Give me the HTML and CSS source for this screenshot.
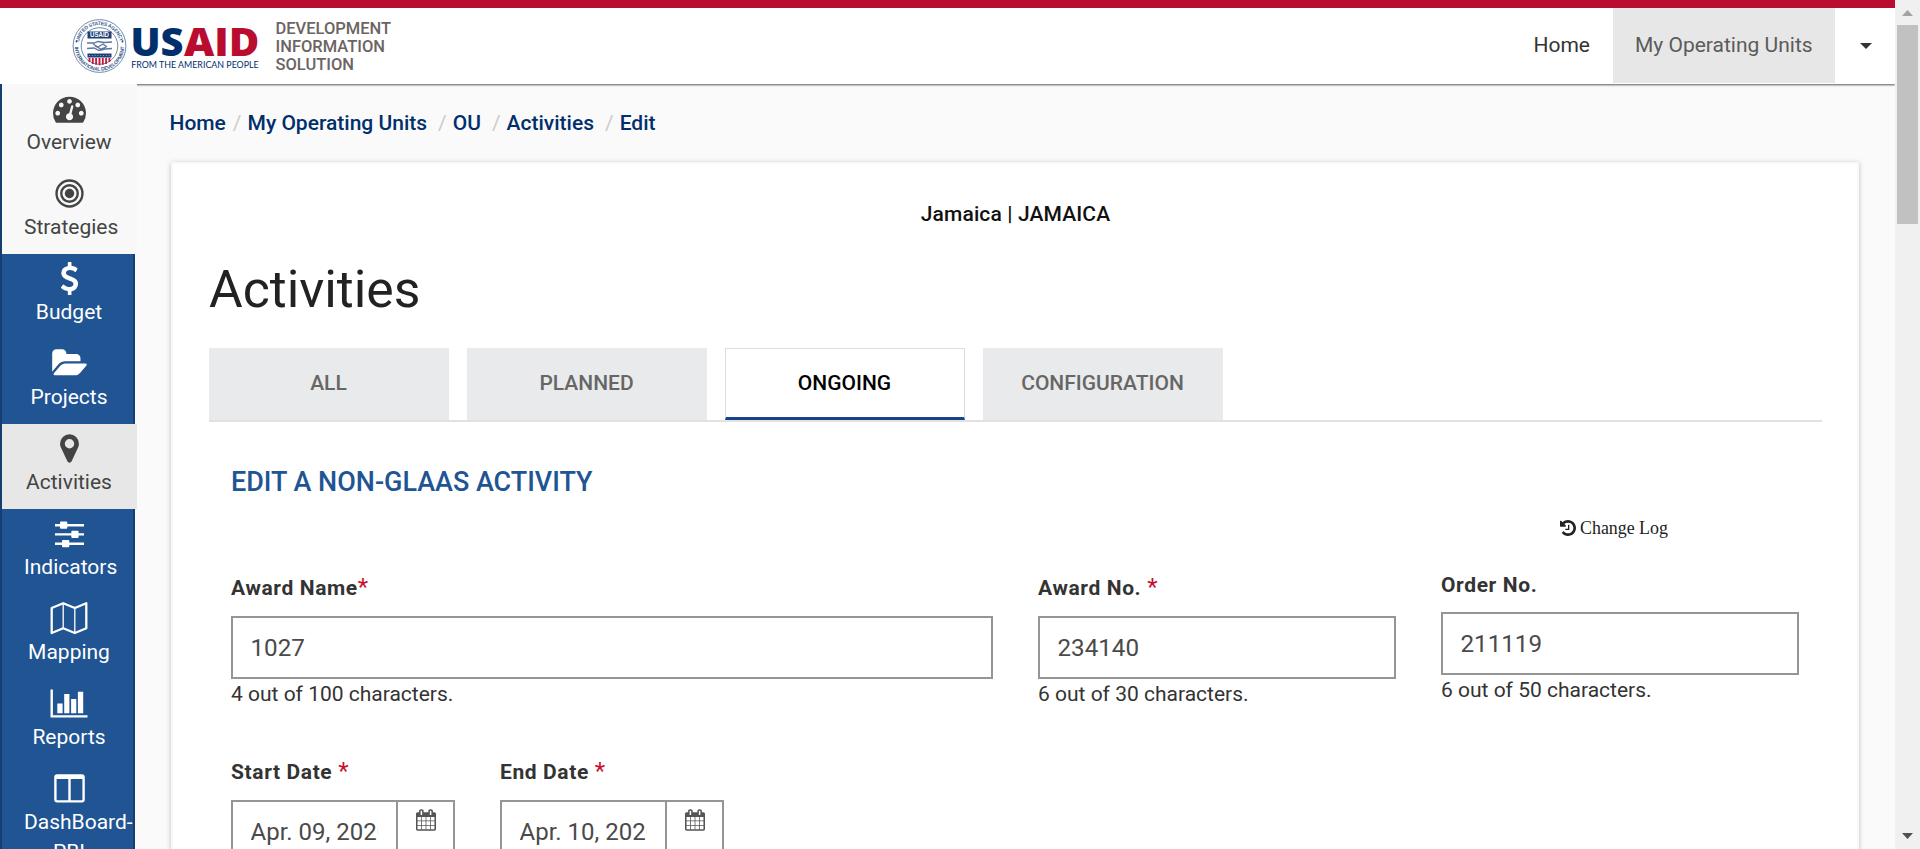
FILE: index.html
```html
<!DOCTYPE html>
<html lang="en">
<head>
<meta charset="utf-8">
<title>Activities - Development Information Solution</title>
<link rel="stylesheet" href="styles.css">
</head>
<body>
<div class="page">
  <div class="viewport">
    <header class="header">
      <div class="brand">
        <svg class="logo" width="190" height="60" viewBox="0 0 190 60" role="img" aria-label="USAID from the American people">
          <defs>
            <path id="arc-top" d="M7.600 30a20.900 20.900 0 0 1 41.800 0"/>
            <path id="arc-bottom" d="M3.700 30a24.800 24.800 0 0 0 49.600 0"/>
          </defs>
          <circle cx="28.500" cy="30" r="26.400" fill="#fff" stroke="#6f8aae" stroke-width="1"/>
          <circle cx="28.500" cy="30" r="18.300" fill="#fff" stroke="#6f8aae" stroke-width="1"/>
          <g class="seal-text">
            <text textLength="57"><textPath href="#arc-top" startOffset="4" textLength="57">UNITED STATES AGENCY</textPath></text>
            <text textLength="76"><textPath href="#arc-bottom" startOffset="1" textLength="76">INTERNATIONAL DEVELOPMENT</textPath></text>
          </g>
          <circle cx="5.500" cy="25.500" r=".9" fill="#1d3f74"/>
          <circle cx="51.500" cy="25.500" r=".9" fill="#1d3f74"/>
          <rect x="16.500" y="15.500" width="24" height="7" fill="#1d3f74"/>
          <text class="seal-name" x="19" y="21.300" textLength="19" lengthAdjust="spacingAndGlyphs">USAID</text>
          <path d="M16 27h7l4-1.500 6 1 8-.5M16 32.500l7-.5 5 2.500 6-1.500 7-.5M22 28l5 3 5-3 4 3M24 30l6 3 5-2" fill="none" stroke="#5b789f" stroke-width="1.300"/>
          <path d="M16.500 37.500h24v4h-24z" fill="#1d3f74"/>
          <path d="M18 39.500h21" stroke="#8da2bf" stroke-width="1" stroke-dasharray="1 1.800"/>
          <path d="M18.500 42v4M21.800 42v6M25.100 42v6.700M28.500 42v7.300M31.800 42v6.700M35.100 42v6M38.400 42v4" stroke="#c41e3f" stroke-width="1.900"/>
          <text class="logo-name logo-us" x="59.500" y="40" textLength="53" lengthAdjust="spacingAndGlyphs">US</text>
          <text class="logo-name logo-aid" x="113" y="40" textLength="75.500" lengthAdjust="spacingAndGlyphs">AID</text>
          <text class="logo-tag" x="60.200" y="52" textLength="127.500" lengthAdjust="spacingAndGlyphs">FROM THE AMERICAN PEOPLE</text>
        </svg>
        <div class="product">DEVELOPMENT<br>INFORMATION<br>SOLUTION</div>
      </div>
      <nav class="topnav">
        <a class="topnav-link">Home</a>
        <a class="topnav-link topnav-active">My Operating Units</a>
        <a class="topnav-menu"><svg width="12" height="6" viewBox="0 0 12 6"><path d="M0 0h12L6 6z" fill="#333"/></svg></a>
      </nav>
    </header>

    <div class="body">
      <aside class="sidebar">
        <a class="side-item side-light">
          <svg class="icon" viewBox="0 0 1792 1792"><path d="M384 1152q0-53-37.500-90.500t-90.500-37.500-90.500 37.500-37.500 90.500 37.500 90.500 90.500 37.500 90.500-37.500 37.500-90.500zm192-448q0-53-37.500-90.500t-90.500-37.500-90.500 37.500-37.500 90.500 37.500 90.500 90.500 37.500 90.500-37.500 37.500-90.500zm428 481l101-382q6-26-7.500-48.500t-38.500-29.500-48 6.500-30 39.500l-101 382q-60 5-107 43.500t-63 98.500q-20 77 20 146t117 89 146-20 89-117q16-60-6-117t-72-91zm660-33q0-53-37.500-90.500t-90.500-37.500-90.500 37.500-37.500 90.500 37.500 90.500 90.500 37.500 90.500-37.500 37.500-90.500zm-640-640q0-53-37.500-90.500t-90.500-37.500-90.500 37.500-37.500 90.500 37.500 90.500 90.500 37.500 90.500-37.500 37.500-90.500zm448 192q0-53-37.500-90.500t-90.500-37.500-90.500 37.500-37.500 90.500 37.500 90.500 90.500 37.500 90.500-37.500 37.500-90.500zm320 448q0 261-141 483-19 29-54 29h-1402q-35 0-54-29-141-221-141-483 0-182 71-348t191-286 286-191 348-71 348 71 286 191 191 286 71 348z"/></svg>
          <span class="side-label">Overview</span>
        </a>
        <a class="side-item side-light">
          <svg class="icon" viewBox="0 0 1792 1792"><circle cx="896" cy="896" r="256"/><circle class="ring" cx="896" cy="896" r="448"/><circle class="ring" cx="896" cy="896" r="704"/></svg>
          <span class="side-label">Strategies</span>
        </a>
        <a class="side-item">
          <svg class="icon" viewBox="0 0 1792 1792"><path d="M1362 1185q0 153-99.500 263.500t-258.500 136.500v175q0 14-9 23t-23 9h-135q-13 0-22.500-9.500t-9.500-22.500v-175q-66-9-127.500-31t-101.500-44.500-74-48-46.500-37.500-17.500-18q-17-21-2-41l103-135q7-10 23-12 15-2 24 9l2 2q113 99 243 125 37 8 74 8 81 0 142.500-43t61.500-122q0-28-15-53t-33.500-42-58.500-37.500-66-32-80-32.500q-39-16-61.500-25t-61.500-26.500-62.500-31-56.500-35.500-53.500-42.500-43.500-49-35.500-58-21-66.500-8.500-78q0-138 98-242t255-134v-180q0-13 9.500-22.500t22.500-9.500h135q14 0 23 9t9 23v176q57 6 110.500 23t87 33.500 63.500 37.500 39 29 15 14q17 18 5 38l-81 146q-8 15-23 16-14 3-27-7-3-3-14.500-12t-39-26.500-58.500-32-74.500-26-85.500-11.500q-95 0-155 43t-60 111q0 26 8.500 48t29.500 41.500 39.500 33 56 31 60.500 27 70 27.500q53 20 81 31.500t76 35 75.500 42.500 62 50 53 63.500 31.500 76.500 13 94z"/></svg>
          <span class="side-label">Budget</span>
        </a>
        <a class="side-item">
          <svg class="icon icon-wide" viewBox="0 0 1943 1792"><path d="M1943 952q0 31-31 66l-336 396q-43 51-120.500 86.500t-143.500 35.500h-1088q-34 0-60.500-13t-26.500-43q0-31 31-66l336-396q43-51 120.500-86.500t143.500-35.500h1088q34 0 60.500 13t26.500 43zm-343-344v160h-832q-94 0-197 47.500t-164 119.500l-337 396-5 6q0-4-.5-12.500t-.5-12.500v-960q0-92 66-158t158-66h320q92 0 158 66t66 158v32h544q92 0 158 66t66 158z"/></svg>
          <span class="side-label">Projects</span>
        </a>
        <a class="side-item side-active">
          <svg class="icon" viewBox="0 0 1792 1792"><path d="M1152 640q0-106-75-181t-181-75-181 75-75 181 75 181 181 75 181-75 75-181zm256 0q0 109-33 179l-364 774q-16 33-47.500 52t-67.500 19-67.500-19-46.500-52l-365-774q-33-70-33-179 0-212 150-362t362-150 362 150 150 362z"/></svg>
          <span class="side-label">Activities</span>
        </a>
        <a class="side-item">
          <svg class="icon" viewBox="0 0 33 33"><path d="M2 7h29v2.400H2zM2 16.200h29v2.400H2zM2 25.500h29v2.400H2z"/><rect x="7" y="4.600" width="7.300" height="7.200" rx="1"/><rect x="18.300" y="13.800" width="7.300" height="7.200" rx="1"/><rect x="9" y="23.100" width="7.300" height="7.200" rx="1"/></svg>
          <span class="side-label">Indicators</span>
        </a>
        <a class="side-item">
          <svg class="icon icon-xwide" viewBox="0 0 38 33"><path class="line" d="M1.700 6L13.200 1.200 24.800 6 36.300 1.200V26.200L24.800 31 13.200 26.200 1.700 31z"/><path class="thin" d="M13.200 1.200v25M24.800 6v25"/></svg>
          <span class="side-label">Mapping</span>
        </a>
        <a class="side-item">
          <svg class="icon icon-xwide" viewBox="0 0 38 33"><path d="M.5 2.500h2.400v25.700h34.600v2.300H.5zM7.300 16.500h5.300v9.700H7.300zM14.200 7h5.200v19.200h-5.200zM21.100 12h5.200v14.200h-5.200zM27.900 4.800h5.300v21.400h-5.300z"/></svg>
          <span class="side-label">Reports</span>
        </a>
        <a class="side-item">
          <svg class="icon" viewBox="0 0 33 33"><path fill-rule="evenodd" d="M4.200 2.300h24.600a3 3 0 0 1 3 3v22.200a3 3 0 0 1-3 3H4.200a3 3 0 0 1-3-3V5.300a3 3 0 0 1 3-3zM3.600 7v20.600a.6.600 0 0 0 .6.600h11.100V7zM17.700 7v21.200h11.100a.6.600 0 0 0 .6-.6V7z"/></svg>
          <span class="side-label">DashBoard-PBI</span>
        </a>
      </aside>

      <main class="main">
        <nav class="crumbs">
          <a>Home</a><span class="sep">/</span><a>My Operating Units</a><span class="sep sep-wide">/</span><a>OU</a><span class="sep sep-wide">/</span><a>Activities</a><span class="sep sep-wide">/</span><a>Edit</a>
        </nav>
        <section class="card">
          <div class="ou-name">Jamaica | JAMAICA</div>
          <h1 class="title">Activities</h1>
          <div class="tabs">
            <a class="tab">ALL</a>
            <a class="tab">PLANNED</a>
            <a class="tab tab-active">ONGOING</a>
            <a class="tab">CONFIGURATION</a>
          </div>
          <form class="form">
            <h2 class="form-title">EDIT A NON-GLAAS ACTIVITY</h2>
            <div class="log">
              <svg class="log-icon" viewBox="0 0 1536 1536"><path transform="translate(-128 -128)" d="M1664 896q0 156-61 298t-164 245-245 164-298 61q-172 0-327-72.500t-264-204.500q-7-10-6.500-22.500t8.500-20.500l137-138q10-9 25-9 16 2 23 12 73 95 179 147t225 52q104 0 198.500-40.500t163.500-109.500 109.500-163.500 40.500-198.500-40.500-198.500-109.500-163.500-163.500-109.500-198.500-40.500q-98 0-188 35.500t-160 101.500l137 138q31 30 14 69-17 40-59 40h-448q-26 0-45-19t-19-45v-448q0-42 40-59 39-17 69 14l130 129q107-101 244.500-156.500t284.500-55.500q156 0 298 61t245 164 164 245 61 298zm-640-288v448q0 14-9 23t-23 9h-320q-14 0-23-9t-9-23v-64q0-14 9-23t23-9h224v-352q0-14 9-23t23-9h64q14 0 23 9t9 23z"/></svg>
              <span>Change Log</span>
            </div>
            <div class="grid grid-award">
              <div class="field field-required">
                <label class="label">Award Name<span class="star">*</span></label>
                <div class="input">1027</div>
                <div class="hint">4 out of 100 characters.</div>
              </div>
              <div class="field field-required">
                <label class="label">Award No. <span class="star">*</span></label>
                <div class="input">234140</div>
                <div class="hint">6 out of 30 characters.</div>
              </div>
              <div class="field">
                <label class="label">Order No.</label>
                <div class="input">211119</div>
                <div class="hint">6 out of 50 characters.</div>
              </div>
            </div>
            <div class="grid grid-dates">
              <div class="field">
                <label class="label">Start Date <span class="star">*</span></label>
                <div class="date">
                  <div class="date-value"><span class="clip">Apr. 09, 2020</span></div>
                  <svg class="cal" viewBox="0 0 1664 1792"><use href="#calendar"/></svg>
                </div>
              </div>
              <div class="field">
                <label class="label">End Date <span class="star">*</span></label>
                <div class="date">
                  <div class="date-value"><span class="clip">Apr. 10, 2020</span></div>
                  <svg class="cal" viewBox="0 0 1664 1792"><defs><path id="calendar" transform="translate(-64)" d="M192 1664h288v-288h-288v288zm352 0h320v-288h-320v288zm-352-352h288v-320h-288v320zm352 0h320v-320h-320v320zm-352-384h288v-288h-288v288zm736 736h320v-288h-320v288zm-384-736h320v-288h-320v288zm768 736h288v-288h-288v288zm-384-352h320v-320h-320v320zm-352-864v-288q0-13-9.500-22.500t-22.500-9.500h-64q-13 0-22.500 9.500t-9.500 22.500v288q0 13 9.500 22.500t22.500 9.500h64q13 0 22.500-9.500t9.500-22.500zm736 864h288v-320h-288v320zm-384-384h320v-288h-320v288zm384 0h288v-288h-288v288zm32-480v-288q0-13-9.500-22.500t-22.500-9.500h-64q-13 0-22.500 9.500t-9.500 22.500v288q0 13 9.500 22.500t22.500 9.500h64q13 0 22.500-9.500t9.500-22.500zm384-64v1280q0 52-38 90t-90 38h-1408q-52 0-90-38t-38-90v-1280q0-52 38-90t90-38h128v-96q0-66 47-113t113-47h64q66 0 113 47t47 113v96h384v-96q0-66 47-113t113-47h64q66 0 113 47t47 113v96h128q52 0 90 38t38 90z"/></defs><use href="#calendar"/></svg>
                </div>
              </div>
            </div>
          </form>
        </section>
      </main>
    </div>
  </div>

  <div class="scrollbar">
    <svg width="11" height="6" viewBox="0 0 11 6"><path d="M0 6h11L5.500 0z" fill="#a3a3a3"/></svg>
    <div class="thumb"></div>
    <svg class="scroll-down" width="11" height="6" viewBox="0 0 11 6"><path d="M0 0h11L5.500 6z" fill="#505050"/></svg>
  </div>
</div>
</body>
</html>
```
FILE: styles.css
```css
* { box-sizing: border-box; }
body {
  margin: 0;
  overflow: hidden;
  background: #fafafa;
  color: #333;
  font: 400 21px/30px Roboto, "Liberation Sans", sans-serif;
}
h1, h2 { margin: 0; }
svg { display: block; }

.page { display: flex; width: 1920px; height: 849px; overflow: hidden; }
.viewport { width: 1895px; display: flex; flex-direction: column; }

/* header */
.header {
  flex: none;
  height: 84px;
  display: flex;
  justify-content: space-between;
  background: #fff;
  border-top: 8px solid #ba0c2f;
  box-shadow: 0 1px 2px rgba(0, 0, 0, .65);
}
.brand { display: flex; padding: 8px 0 0 70.500px; }
.product {
  margin: 4px 0 0 15px;
  font-size: 16.500px;
  font-weight: 500;
  line-height: 18px;
  color: #6c6463;
}
.seal-text { font: 700 5px "Liberation Sans", sans-serif; fill: #3c5b8a; }
.seal-name { font: 700 6.300px "Liberation Sans", sans-serif; fill: #fff; }
.logo-name { font: 800 38.500px "Open Sans", sans-serif; }
.logo-us { fill: #002f6c; }
.logo-aid { fill: #ba0c2f; }
.logo-tag { font: 400 9.600px Lato, sans-serif; fill: #002f6c; }

.topnav { display: flex; height: 75px; line-height: 74px; white-space: nowrap; }
.topnav-link { padding: 0 23px 0 22px; }
.topnav-active { background: #e7e7e7; color: #5b5b5b; width: 222px; }
.topnav-menu { padding: 35px 23px 0 25px; }

/* sidebar */
.body { flex: 1; display: flex; min-height: 0; }
.sidebar {
  flex: none;
  position: relative;
  width: 135px;
  height: 765px;
  background: #205493;
  border: solid #183e70;
  border-width: 0 2px;
  color: #fff;
}
.side-item {
  display: flex;
  flex-direction: column;
  align-items: center;
  width: 135px;
  height: 85px;
  padding: 8px 23px 0 22px;
}
.side-light { background: #f8f8f8; color: #444; }
.side-active { background: #e7e7e7; color: #444; }
.icon { flex: none; width: 33px; height: 33px; fill: currentColor; }
.icon-wide { width: 35.800px; }
.icon-xwide { width: 38px; }
.ring { fill: none; stroke: currentColor; stroke-width: 128px; }
.line { fill: none; stroke: currentColor; stroke-width: 2.300px; stroke-linejoin: round; }
.thin { fill: none; stroke: currentColor; stroke-width: 1.300px; }
.side-label { margin-top: 2px; min-width: 90px; max-width: 90px; text-align: center; }

/* main column */
.main { flex: 1; padding: 24px 36px 0; }
.crumbs { display: flex; height: 30px; margin-left: -1.500px; font-weight: 500; color: #002f6c; }
.sep { margin: 0 6px 0 7px; color: #ccc; font-weight: 400; }
.sep-wide { margin-left: 11px; }

.card {
  height: 720px;
  margin-top: 24px;
  padding: 35px 35px 0 36px;
  background: #fff;
  border: 2px solid #f8f8f8;
  box-shadow: 0 1px 5px rgba(0, 0, 0, .24);
}
.ou-name { text-align: center; font-weight: 500; letter-spacing: .12px; color: #111; }
.title { margin: 31px 0 28px; font-size: 51.700px; line-height: 60px; font-weight: 400; color: #222; }
.tabs { display: flex; gap: 18px; border-bottom: 2px solid #e2e2e2; }
.tab {
  width: 240px;
  height: 72px;
  padding-right: 1px;
  text-align: center;
  line-height: 71px;
  font-weight: 500;
  background: #e9eaeb;
  color: #666;
}
.tab-active {
  background: #fff;
  color: #000;
  border: 1px solid #ddd;
  border-bottom: 3px solid #1a428a;
  line-height: 69px;
}

/* form */
.form { padding: 42px 22px 0; }
.form-title { font-size: 26.950px; line-height: 36px; font-weight: 500; color: #205493; }
.log {
  display: flex;
  gap: 4px;
  margin: 16px 0 31px 1329px;
  font: 17.900px/24px "Liberation Serif", serif;
  color: #222;
}
.log-icon { width: 16px; height: 16px; margin-top: 4px; fill: #222; }
.grid { display: grid; column-gap: 45px; }
.grid-award { grid-template-columns: 762px 358px 358px; height: 137px; }
.grid-dates { grid-template-columns: 224px 224px; margin-top: 50px; }
.field-required { padding-top: 3px; }
.label { display: block; height: 28px; line-height: 28px; font-weight: 700; letter-spacing: .62px; color: #333; }
.star { font-size: 24px; line-height: 0; font-weight: 400; letter-spacing: 0; color: #c8102e; }
.input {
  height: 63px;
  margin-top: 13px;
  padding-left: 17.500px;
  border: 2px solid #959595;
  background: #fff;
  font-size: 24.200px;
  line-height: 61px;
  color: #4a4a4a;
}
.field-required .input { margin-top: 14px; }
.hint { margin-top: 1px; line-height: 28px; }
.date { display: flex; height: 63px; margin-top: 14px; border: 2px solid #959595; background: #fff; color: #4a4a4a; }
.date-value {
  width: 165px;
  padding: 0 18px 0 17.500px;
  border-right: 2px solid #959595;
  font-size: 24px;
  line-height: 61px;
}
.clip { display: block; overflow: hidden; white-space: nowrap; }
.cal { width: 20px; height: 22px; margin: 7px 0 0 18px; fill: #555; }

/* window scrollbar */
.scrollbar {
  width: 25px;
  display: flex;
  flex-direction: column;
  align-items: center;
  padding: 10px 0;
  background: #f0f0f0;
}
.thumb { width: 21px; height: 199px; margin-top: 9px; background: #c1c1c1; }
.scroll-down { margin-top: auto; }
```
